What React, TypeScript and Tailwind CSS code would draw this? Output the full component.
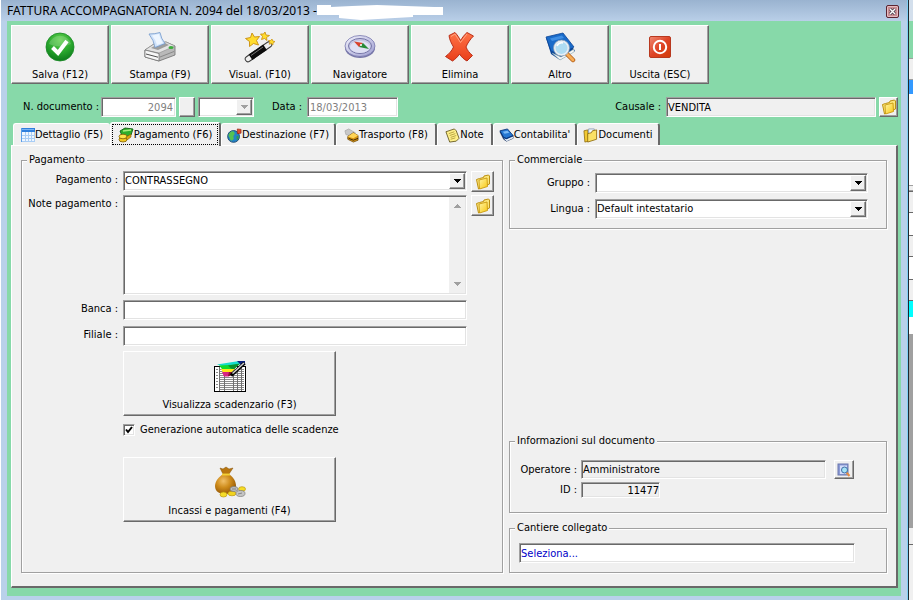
import { useState } from 'react';
import type { ReactNode } from 'react';

const SUNKEN =
  'border border-t-[#a0a0a0] border-l-[#a0a0a0] border-b-white border-r-white shadow-[inset_1px_1px_#696969,inset_-1px_-1px_#e3e3e3]';
const RAISED =
  'bg-[#f0f0f0] border border-t-white border-l-white border-b-[#696969] border-r-[#696969] shadow-[inset_-1px_-1px_#a0a0a0]';

function SaveIcon() {
  return (
    <svg width="32" height="32" viewBox="0 0 32 32">
      <defs>
        <radialGradient id="save" cx="50%" cy="25%" r="75%">
          <stop offset="0" stopColor="#5fd04b" />
          <stop offset="0.6" stopColor="#27a52c" />
          <stop offset="1" stopColor="#0d7a1c" />
        </radialGradient>
      </defs>
      <circle cx="16" cy="16" r="14" fill="url(#save)" stroke="#1a8a26" strokeWidth="0.8" />
      <path d="M5 13a11.5 11.5 0 0 1 22 0q-11 5-22 0z" fill="#fff" opacity="0.18" />
      <path d="M8.500 16.500l5.500 5.500 9-12" fill="none" stroke="#fff" strokeWidth="4" />
    </svg>
  );
}

function PrinterIcon() {
  return (
    <svg width="32" height="32" viewBox="0 0 32 32">
      <path d="M1 19l9-6 12-2 9 4v9l-16 6-14-4z" fill="#b9b9b9" stroke="#6d6d6d" strokeWidth="0.8" />
      <path d="M1 19l9-6 12-2 9 4-16 7z" fill="#e3e3e3" stroke="#8b8b8b" strokeWidth="0.6" />
      <path d="M7 17l5-3 9-2 4 2-11 5z" fill="#9d9d9d" />
      <path d="M5 3q6 0 11-1.500 1 6 5 11l-10 4q-1-7-6-13.500z" fill="#cfe2fa" stroke="#7299cc" strokeWidth="0.8" />
      <path d="M8 4.500l7-1.500q1 5 4 9l-6 2q-1-5-5-9.500z" fill="#eef6ff" />
      <path d="M1 19l14 3.500V30L1 26z" fill="#f7f7f7" stroke="#666" strokeWidth="0.7" />
      <path d="M2 23l12 3.200" stroke="#4f4f4f" strokeWidth="1" />
      <path d="M16 26l14-5.500" stroke="#8a8a8a" strokeWidth="1" />
      <ellipse cx="27" cy="16.500" rx="2.500" ry="1.500" fill="#3cae3c" />
    </svg>
  );
}

function WandIcon() {
  return (
    <svg width="32" height="32" viewBox="0 0 32 32">
      <path d="M4 28l21-14.500" stroke="#3b3b3b" strokeWidth="6.500" strokeLinecap="round" />
      <path d="M4 28l21-14.500" stroke="#efefef" strokeWidth="4.500" strokeLinecap="round" />
      <path d="M6.500 26.300l14.500-10" stroke="#0c0c0c" strokeWidth="6.500" />
      <path d="M7 24.500l12-8.500" stroke="#777" strokeWidth="1" />
      <path d="M8 2l2.500 4 5-.5-3 4 2 4.500-5-1.500-4 3v-5l-4-3 5-1z" fill="#ffdc2e" stroke="#c78c0c" strokeWidth="0.9" />
      <path d="M21 1l1 3 3.500.5-3 2 .5 3-2.500-2-3 1 1-3-2-2.500h3z" fill="#ffdc2e" stroke="#c78c0c" strokeWidth="0.8" />
      <path d="M28 8l.8 2 2.200.6-2 1.400v2l-1.700-1.400-2.200.6.8-2-1.400-1.700h2.200z" fill="#ffdc2e" stroke="#c78c0c" strokeWidth="0.7" />
    </svg>
  );
}

function CompassIcon() {
  return (
    <svg width="32" height="32" viewBox="0 0 32 32">
      <defs>
        <linearGradient id="compass" x1="0" y1="0" x2="1" y2="1">
          <stop offset="0" stopColor="#f2f2fc" />
          <stop offset="1" stopColor="#9d9dd0" />
        </linearGradient>
      </defs>
      <ellipse cx="16" cy="17" rx="15" ry="10" fill="#7777a8" />
      <ellipse cx="16" cy="15" rx="15" ry="10.500" fill="url(#compass)" stroke="#7878ad" strokeWidth="0.8" />
      <ellipse cx="16" cy="15" rx="11.500" ry="7.500" fill="#c6c7e4" stroke="#7575a6" />
      <ellipse cx="16" cy="16" rx="10" ry="6" fill="#dfe0f4" />
      <path d="M10 10.500l9 1.500-4 4z" fill="#d8432e" />
      <path d="M25 18l-6-6-4 4z" fill="#278a37" />
      <circle cx="17" cy="14" r="1" fill="#fff" />
    </svg>
  );
}

function DeleteIcon() {
  return (
    <svg width="32" height="32" viewBox="0 0 32 32">
      <defs>
        <linearGradient id="del" x1="0" y1="0" x2="0" y2="1">
          <stop offset="0" stopColor="#ff7448" />
          <stop offset="1" stopColor="#e93d19" />
        </linearGradient>
      </defs>
      <path
        d="M5 4.500l6-3c2 2 4 5 5.500 8 2-3 4-6 6.500-8l6.500 3.500c-3 3-6 7-7.500 11 1.500 3.500 3.500 6 6.500 8.500L23 30c-3-1.500-5.500-4-7.500-7-2 3-4 5-7 7l-7-4.500c3.500-2.500 6.500-6 8-9.500-2-3.500-4-7-4.500-11.500z"
        fill="url(#del)"
        stroke="#b3240d"
        strokeWidth="0.9"
      />
      <path d="M7 5.500l4-2.500 5.500 8.500L23 3" fill="none" stroke="#ffa380" strokeWidth="1" />
    </svg>
  );
}

function BookSearchIcon() {
  return (
    <svg width="32" height="32" viewBox="0 0 32 32">
      <path d="M2 7l5 16 9 6 15-9-2-3z" fill="#0c4596" />
      <path d="M8 22l9 4 13-8v3l-14 8z" fill="#f4f4f4" stroke="#8aa" strokeWidth="0.5" />
      <path d="M2 6l17-4 11 14-14 8-9-4z" fill="#1a6bc9" stroke="#0c4596" strokeWidth="0.8" />
      <path d="M6 7.500l12-3 2 2.500-12 3z" fill="#3f8fe4" />
      <path d="M23 23l6 6" stroke="#b15b16" strokeWidth="4.500" strokeLinecap="round" />
      <path d="M23 23l6 6" stroke="#f6ac55" strokeWidth="3" strokeLinecap="round" />
      <circle cx="17.500" cy="17" r="7" fill="#aedcf2" stroke="#e8eef4" strokeWidth="2" />
      <circle cx="17.500" cy="17" r="8" fill="none" stroke="#7f98ad" strokeWidth="0.7" />
      <path d="M13 15q2-4 6-3" fill="none" stroke="#fff" strokeWidth="1.500" />
    </svg>
  );
}

function PowerIcon() {
  return (
    <svg width="32" height="32" viewBox="0 0 32 32">
      <defs>
        <linearGradient id="power" x1="0" y1="0" x2="1" y2="1">
          <stop offset="0" stopColor="#f08a74" />
          <stop offset="0.5" stopColor="#de4426" />
          <stop offset="1" stopColor="#d23c08" />
        </linearGradient>
      </defs>
      <rect x="5.500" y="5.500" width="21" height="21" rx="1.500" fill="url(#power)" stroke="#b8391f" />
      <circle cx="16" cy="16" r="6.200" fill="none" stroke="#fff" strokeWidth="2" />
      <path d="M16 13v6" stroke="#fff" strokeWidth="2" />
    </svg>
  );
}

function ScheduleIcon() {
  return (
    <svg width="32" height="32" viewBox="0 0 32 32">
      <g shapeRendering="crispEdges">
        <rect x="0.500" y="6.500" width="31" height="25" fill="#fff" stroke="#000" />
        <path
          d="M2 9.500h2M2 12.500h2M2 15.500h2M2 18.500h2M2 21.500h2M2 24.500h2M2 27.500h2M6 9.500h24M6 11.500h24M6 13.500h24M6 15.500h24M6 17.500h24M6 19.500h24M6 21.500h24M6 23.500h24M6 25.500h24M6 27.500h24M6 29.500h24"
          stroke="#8c8c8c"
        />
        <path d="M5.500 7v24M10.500 7v24M19.500 7v24M23.500 7v24M27.500 7v24" stroke="#707070" />
      </g>
      <path d="M3 4.500L25 1h6l-8 5H8z" fill="#16dccb" />
      <path d="M5 5.500l20-1-5 4.500H8z" fill="#10d92a" />
      <path d="M14 5.500l12-2-6 6-3-1z" fill="#0b8f2e" />
      <path d="M7 9h14l-4 3.500H9z" fill="#ffe914" />
      <path d="M8 12h10l-3 4.500h-5z" fill="#d62482" />
      <path d="M15 12h4l-3 4h-2z" fill="#8d1230" />
      <path d="M23 1h8v3l-4 1z" fill="#0a2180" />
      <path d="M17 15.500L30.500 3" stroke="#000" strokeWidth="3.500" />
      <path d="M18.500 13.500L30 3" stroke="#d4d4d4" strokeWidth="1.500" />
    </svg>
  );
}

function MoneyBagIcon() {
  return (
    <svg width="32" height="32" viewBox="0 0 32 32">
      <defs>
        <radialGradient id="bag" cx="40%" cy="35%" r="65%">
          <stop offset="0" stopColor="#f1c069" />
          <stop offset="0.500" stopColor="#cf8d1d" />
          <stop offset="1" stopColor="#9b5c05" />
        </radialGradient>
      </defs>
      <path d="M6 2l3 1 3-2 3 2 4-1-4 6H9z" fill="#b8760f" stroke="#855006" strokeWidth="0.5" />
      <path d="M9 8c-4 3-8 7-8 12 0 6 5 8 10 8s11-2 11-8c0-5-3-9-7-12z" fill="url(#bag)" />
      <path d="M8 8.500h8" stroke="#f4cf35" strokeWidth="2" />
      <g strokeWidth="0.7">
        <ellipse cx="9.500" cy="28.500" rx="3.500" ry="2.500" fill="#f5dc26" stroke="#bb9611" />
        <ellipse cx="18" cy="27.500" rx="4" ry="2.300" fill="#f0d31f" stroke="#bb9611" />
        <ellipse cx="28" cy="23" rx="3.500" ry="2.300" fill="#f5dc26" stroke="#bb9611" />
        <ellipse cx="20" cy="23" rx="4" ry="2.500" fill="#bdbdbd" stroke="#777" />
        <ellipse cx="26.500" cy="27.500" rx="4.500" ry="3" fill="#c5c5c5" stroke="#777" />
      </g>
      <path d="M18 23h4M24 28l4-1" stroke="#777" strokeWidth="0.8" />
    </svg>
  );
}

function FolderIcon() {
  return (
    <svg width="16" height="16" viewBox="0 0 16 16">
      <defs>
        <linearGradient id="folder" x1="0" y1="0" x2="1" y2="1">
          <stop offset="0" stopColor="#fff6a8" />
          <stop offset="1" stopColor="#f9c710" />
        </linearGradient>
      </defs>
      <path d="M1.500 5.500l3-1 4-1 .5-1.500 4.500-1 1 1v8l-8 3-3 2z" fill="#fbe67a" stroke="#bd9010" />
      <path d="M4 6l8-2 .5 8.500-8 2.500z" fill="url(#folder)" stroke="#c99a10" strokeWidth="0.9" />
    </svg>
  );
}

function GridIcon() {
  return (
    <svg width="14" height="14" viewBox="0 0 14 14" shapeRendering="crispEdges">
      <path d="M0 0h14v14H0z" fill="#eef6ff" />
      <path d="M.5.5h13v13H.5zM4 4v10M7 4v10M10 4v10M0 7h14M0 10h14" fill="none" stroke="#a9cdf5" />
      <path d="M0 0h14v4H0z" fill="#2f7fdd" />
      <path d="M1 1h12v1H1z" fill="#79b4f4" />
      <path d="M0 0h1v14H0z" fill="#5b9de8" />
    </svg>
  );
}

function CashIcon() {
  return (
    <svg width="16" height="16" viewBox="0 0 16 16">
      <path d="M2 4l5-3 8 1-2 6-8 3z" fill="#2fae2b" stroke="#0e5f14" strokeWidth="0.9" />
      <path d="M5 4l8-1" stroke="#a8ed7e" strokeWidth="1.500" />
      <ellipse cx="5" cy="12.500" rx="4" ry="2.500" fill="#f1c820" stroke="#7d5c05" strokeWidth="0.8" />
      <ellipse cx="5" cy="9.500" rx="4" ry="2.300" fill="#ffe34b" stroke="#7d5c05" strokeWidth="0.8" />
      <path d="M8 10l5-3v3l-4 3z" fill="#d9a711" stroke="#7d5c05" strokeWidth="0.6" />
    </svg>
  );
}

function GlobeIcon() {
  return (
    <svg width="15" height="15" viewBox="0 0 16 16">
      <circle cx="7" cy="9" r="6.300" fill="#2383c8" stroke="#123c63" strokeWidth="0.9" />
      <path d="M3 5c2-2 4-2 5 0s-2 3-1 5-2 4-3 3-1-3-2-4 0-3 1-4z" fill="#55c252" />
      <path d="M10 9l2-1 .5 3-2 2z" fill="#2f9d4c" />
      <path d="M11 6V1l4 .5v4z" fill="#e14b2b" stroke="#8c2110" strokeWidth="0.7" />
    </svg>
  );
}

function TransportIcon() {
  return (
    <svg width="15" height="15" viewBox="0 0 16 16">
      <path d="M1 3l4-2 7 4-4 4-6-2z" fill="#c8c8c8" stroke="#999" strokeWidth="0.6" />
      <path d="M4 9l6-4 5 3v5l-5 2-6-3z" fill="#d89412" stroke="#6f4804" strokeWidth="0.8" />
      <path d="M4 9l6-4 5 3-5 3z" fill="#ffd455" />
      <path d="M5 11l5 2 5-2" fill="none" stroke="#392503" />
    </svg>
  );
}

function NoteIcon() {
  return (
    <svg width="15" height="15" viewBox="0 0 16 16">
      <path d="M1 4l9-3 2 2 3 8-3 3-7 1z" fill="#fff08a" stroke="#5f5218" strokeWidth="0.9" />
      <path d="M4 6l6-2M5 8l6-2M6 10l6-2M6 12l5-1.500" stroke="#a38d2b" strokeWidth="0.8" />
    </svg>
  );
}

function LedgerIcon() {
  return (
    <svg width="15" height="15" viewBox="0 0 16 16">
      <path d="M1 4l4 8 3 2 7-3v-3z" fill="#0c3b86" stroke="#071f4d" strokeWidth="0.7" />
      <path d="M5 11l3 1 7-3v2l-7 3z" fill="#e4ecf5" />
      <path d="M1 3l8-2 6 7-7 3-3-1z" fill="#2677d2" stroke="#0a3475" strokeWidth="0.9" />
      <path d="M4 4l5-1 2 2-5 1z" fill="#7cbaf5" />
    </svg>
  );
}

function DocumentsIcon() {
  return (
    <svg width="15" height="15" viewBox="0 0 16 16">
      <path d="M1 3l4-1 1 12-4 1z" fill="#f1c932" stroke="#8a6508" strokeWidth="0.8" />
      <path d="M6 1h6v10H6z" fill="#f3f8ff" stroke="#7a8eaa" strokeWidth="0.8" />
      <path d="M5 6l4-1 1-2 4.500-1v10L5 15z" fill="#fbe165" stroke="#8f6b0a" strokeWidth="0.9" />
    </svg>
  );
}

function LookupIcon() {
  return (
    <svg width="14" height="14" viewBox="0 0 14 14">
      <rect x="1" y="1" width="10" height="11" fill="#8b9bd6" stroke="#6a77ad" />
      <path d="M3 2.500h7V11H3z" fill="#d3dcfa" />
      <path d="M9.500 9.500l3 3.500" stroke="#e28c45" strokeWidth="2" />
      <circle cx="7.500" cy="7" r="3" fill="#a5e2f5" stroke="#3f6fa5" />
    </svg>
  );
}

function Arrow({ disabled }: { disabled?: boolean }) {
  return (
    <svg width="7" height="4" viewBox="0 0 7 4" shapeRendering="crispEdges">
      <path d="M0 0h7v1H6v1H5v1H4v1H3V3H2V2H1V1H0z" fill={disabled ? '#a0a0a0' : '#000'} />
    </svg>
  );
}

interface DropDownProps {
  id: string;
  options: string[];
  disabled?: boolean;
  className?: string;
}

function DropDown({ id, options, disabled, className = '' }: DropDownProps) {
  return (
    <div className={`relative h-5 ${className}`}>
      <select
        id={id}
        disabled={disabled}
        aria-label={id}
        className={`block w-full h-full appearance-none bg-white pl-px pr-5 outline-none ${SUNKEN}`}
      >
        {options.map(o => (
          <option key={o}>{o}</option>
        ))}
      </select>
      <span className={`pointer-events-none absolute top-[2px] right-[2px] bottom-[2px] w-4 flex items-center justify-center ${RAISED}`}>
        <Arrow disabled={disabled} />
      </span>
    </div>
  );
}

function FolderButton({ label }: { label: string }) {
  return (
    <button aria-label={label} className={`shrink-0 ml-1 flex items-center justify-center w-[23px] h-[21px] ${RAISED}`}>
      <FolderIcon />
    </button>
  );
}

function Group({ title, className = '', children }: { title: string; className?: string; children: ReactNode }) {
  return (
    <fieldset className={`min-w-0 border border-[#a0a0a0] shadow-[1px_1px_#fff,inset_1px_1px_#fff] ${className}`}>
      <legend className="ml-[5px] px-[2px] bg-[#f0f0f0]">{title}</legend>
      {children}
    </fieldset>
  );
}

function Row({ label, htmlFor, children }: { label: string; htmlFor: string; children: ReactNode }) {
  return (
    <div className="flex items-start">
      <label htmlFor={htmlFor} className="w-24 shrink-0 mr-[5px] pt-[2px] text-right whitespace-nowrap">
        {label} :
      </label>
      {children}
    </div>
  );
}

const tools = [
  { label: 'Salva (F12)', icon: <SaveIcon /> },
  { label: 'Stampa (F9)', icon: <PrinterIcon /> },
  { label: 'Visual. (F10)', icon: <WandIcon /> },
  { label: 'Navigatore', icon: <CompassIcon /> },
  { label: 'Elimina', icon: <DeleteIcon /> },
  { label: 'Altro', icon: <BookSearchIcon /> },
  { label: 'Uscita (ESC)', icon: <PowerIcon /> },
];

const tabs = [
  { label: 'Dettaglio (F5)', icon: <GridIcon />, width: 'w-[97px]' },
  { label: 'Pagamento (F6)', icon: <CashIcon />, width: 'w-[111px]' },
  { label: 'Destinazione (F7)', icon: <GlobeIcon />, width: 'w-[115px]' },
  { label: 'Trasporto (F8)', icon: <TransportIcon />, width: 'w-[101px]' },
  { label: 'Note', icon: <NoteIcon />, width: 'w-[56px]' },
  { label: "Contabilita'", icon: <LedgerIcon />, width: 'w-[84px]' },
  { label: 'Documenti', icon: <DocumentsIcon />, width: 'w-[83px]' },
];

// slices of the window lying behind the dialog, top to bottom
const backdrop = [
  'h-[21px] bg-[#d3dfec]',
  'h-[37px] bg-[#87d9a9]',
  'h-[22px] bg-[#f0f0f0] border-y border-[#a0a0a0]',
  'h-[14px] bg-[#3399ff]',
  'h-[91px] bg-white',
  'h-[6px] bg-[#f0f0f0] border-y border-[#a0a0a0]',
  'h-[22px] bg-[#f0f0f0] border-y border-[#696969]',
  'h-[22px] bg-white',
  'h-[22px] bg-[#f0f0f0] border-y border-[#696969]',
  'h-[22px] bg-white',
  'h-[22px] bg-[#f0f0f0] border-y border-[#696969]',
  'h-[16px] bg-[#00ffff]',
  'h-[17px] bg-white',
  'h-[194px] bg-[#a0a0a0]',
  'h-[17px] bg-[#f0f0f0] border-b border-[#696969]',
];

export default function App() {
  const [active, setActive] = useState(1);
  const [auto, setAuto] = useState(true);

  return (
    <div className="flex min-h-screen bg-[#f0f0f0] text-[11px] leading-[14px] text-black font-['Tahoma','DejaVu_Sans_Condensed','Noto_Sans',sans-serif]">
      <main className="flex-1 min-w-0 flex flex-col bg-[#b9d1ea] border-l border-l-white">
        <header className="flex items-center h-[21px] pl-[6px] pr-2 bg-linear-to-b from-[#9ab3d0] to-[#b9cfe8] text-[12px] font-['Segoe_UI','Noto_Sans',sans-serif]">
          <h1 className="whitespace-nowrap">FATTURA ACCOMPAGNATORIA N. 2094 del 18/03/2013 -</h1>
          <svg width="126" height="15" viewBox="0 0 126 15" className="mt-1 shrink-0">
            <path d="M0 0h14v2l21-1L60 0l57 2h9v8H96v2l-18 1-34 2-22-2v-3H0z" fill="#fff" />
          </svg>
          <button
            aria-label="Chiudi"
            className="ml-auto mt-[2px] flex items-center justify-center w-[13px] h-[13px] rounded-[2px] border border-[#5b2430] bg-[#c98c92] shadow-[inset_0_0_0_1px_#e5bcc0]"
          >
            <svg width="7" height="7" viewBox="0 0 7 7">
              <path d="M1 1l5 5M6 1L1 6" stroke="#463b49" strokeWidth="3" />
              <path d="M1 1l5 5M6 1L1 6" stroke="#fff" strokeWidth="1.400" />
            </svg>
          </button>
        </header>

        <div className="flex-1 flex flex-col ml-[6px] mr-[6px] mb-[6px] pl-1 pr-[3px] pt-1 pb-2 bg-[#87d9a9]">
          <div className="flex gap-[2px]">
            {tools.map(t => (
              <button key={t.label} className={`flex flex-col items-center gap-[5px] w-[98px] h-[59px] pt-[5px] ${RAISED}`}>
                {t.icon}
                <span>{t.label}</span>
              </button>
            ))}
          </div>

          <div className="flex items-center h-5 mt-[13px] pl-3">
            <label htmlFor="numero" className="w-[75px] whitespace-nowrap">N. documento :</label>
            <input
              id="numero"
              disabled
              defaultValue="2094"
              className={`ml-[3px] w-[75px] h-5 px-[2px] bg-white text-right text-[#808080] ${SUNKEN}`}
            />
            <button aria-label="Cerca numero" className={`ml-[3px] w-4 h-5 ${RAISED}`} />
            <DropDown id="serie" options={['']} disabled className="ml-[3px] w-14" />
            <label htmlFor="data" className="ml-[18px] w-8 whitespace-nowrap">Data :</label>
            <input
              id="data"
              disabled
              defaultValue="18/03/2013"
              className={`ml-[3px] w-[91px] h-5 px-[2px] bg-white text-[#808080] ${SUNKEN}`}
            />
            <label htmlFor="causale" className="ml-auto whitespace-nowrap">Causale :</label>
            <input id="causale" readOnly defaultValue="VENDITA" className={`ml-[5px] mr-[3px] w-[210px] h-5 px-px bg-[#f0f0f0] ${SUNKEN}`} />
            <button aria-label="Apri causale" className={`flex items-center justify-center w-[19px] h-5 ${RAISED}`}>
              <FolderIcon />
            </button>
          </div>

          <div role="tablist" className="flex items-end h-[23px] mt-[5px] pl-[2px]">
            {tabs.map((t, i) => (
              <button
                key={t.label}
                role="tab"
                aria-selected={i === active}
                onClick={() => setActive(i)}
                className={`flex justify-center whitespace-nowrap rounded-t-[3px] bg-[#f0f0f0] border-t border-l border-t-white border-l-white ${t.width} ${
                  i === active
                    ? 'relative z-10 h-6 -mb-px p-px border-r-2 border-r-[#696969]'
                    : `items-center h-[22px] pt-px ${i + 1 === active ? '' : 'border-r-2 border-r-[#696969]'}`
                }`}
              >
                <span className={i === active ? 'flex items-center justify-center w-full h-[21px] border border-dotted border-black' : 'flex items-center'}>
                  {t.icon}
                  {t.label}
                </span>
              </button>
            ))}
          </div>

          <div
            role="tabpanel"
            className="flex-1 grid grid-cols-[1fr_378px] gap-[6px] pt-[7px] pl-[9px] pr-[9px] pb-[13px] bg-[#f0f0f0] border-t border-l border-white border-r-2 border-b-2 border-r-[#696969] border-b-[#696969]"
          >
            <Group title="Pagamento" className="pb-[50px]">
              <div className="flex flex-col pt-1 pr-2">
                <Row label="Pagamento" htmlFor="pagamento">
                  <DropDown id="pagamento" options={['CONTRASSEGNO']} className="flex-1" />
                  <FolderButton label="Apri pagamento" />
                </Row>
                <div className="mt-[3px]">
                  <Row label="Note pagamento" htmlFor="note">
                    <div className={`flex flex-1 h-[100px] p-px bg-white ${SUNKEN}`}>
                      <textarea id="note" className="flex-1 resize-none outline-none overflow-hidden" />
                      <div className="flex flex-col items-center justify-between w-4 py-[7px] bg-[#f0f0f0]">
                        <span className="rotate-180"><Arrow disabled /></span>
                        <Arrow disabled />
                      </div>
                    </div>
                    <FolderButton label="Apri note" />
                  </Row>
                </div>
                <div className="mt-[5px] mr-[27px] flex flex-col gap-[6px]">
                  <Row label="Banca" htmlFor="banca">
                    <input id="banca" className={`flex-1 h-5 px-[2px] bg-white ${SUNKEN}`} />
                  </Row>
                  <Row label="Filiale" htmlFor="filiale">
                    <input id="filiale" className={`flex-1 h-5 px-[2px] bg-white ${SUNKEN}`} />
                  </Row>
                </div>
                <div className="ml-[101px] mt-[5px] flex flex-col items-start">
                  <button className={`flex flex-col items-center gap-[6px] w-[213px] h-[65px] pt-2 ${RAISED}`}>
                    <ScheduleIcon />
                    <span>Visualizza scadenzario (F3)</span>
                  </button>
                  <label className="flex items-center gap-[5px] mt-[7px] whitespace-nowrap">
                    <span className="relative flex w-3 h-3">
                      <input
                        type="checkbox"
                        checked={auto}
                        onChange={e => setAuto(e.target.checked)}
                        className={`w-3 h-3 appearance-none bg-white ${SUNKEN}`}
                      />
                      {auto && (
                        <svg width="12" height="12" viewBox="0 0 12 12" className="pointer-events-none absolute inset-0">
                          <path d="M3 5.500l2 2.500 4-5" fill="none" stroke="#000" strokeWidth="2" />
                        </svg>
                      )}
                    </span>
                    Generazione automatica delle scadenze
                  </label>
                  <button className={`flex flex-col items-center gap-[6px] mt-5 w-[213px] h-[65px] pt-2 ${RAISED}`}>
                    <MoneyBagIcon />
                    <span>Incassi e pagamenti (F4)</span>
                  </button>
                </div>
              </div>
            </Group>

            <div className="flex flex-col min-w-0">
              <Group title="Commerciale" className="pt-[6px] pb-[9px] pr-[18px]">
                <div className="flex items-center">
                  <label htmlFor="gruppo" className="w-20 mr-[5px] text-right">Gruppo :</label>
                  <DropDown id="gruppo" options={['']} className="flex-1" />
                </div>
                <div className="flex items-center mt-[6px]">
                  <label htmlFor="lingua" className="w-20 mr-[5px] text-right">Lingua :</label>
                  <DropDown id="lingua" options={['Default intestatario']} className="flex-1" />
                </div>
              </Group>

              <Group title="Informazioni sul documento" className="mt-auto pt-3 pb-[14px] pr-8">
                <div className="flex items-center">
                  <label htmlFor="operatore" className="w-[67px] mr-1 text-right whitespace-nowrap">Operatore :</label>
                  <input id="operatore" readOnly defaultValue="Amministratore" className={`flex-1 min-w-0 h-[19px] px-px bg-[#f0f0f0] ${SUNKEN}`} />
                  <button aria-label="Cerca operatore" className={`ml-2 flex items-center justify-center w-5 h-[19px] ${RAISED}`}>
                    <LookupIcon />
                  </button>
                </div>
                <div className="flex items-center mt-[3px]">
                  <label htmlFor="codice" className="w-[67px] mr-1 text-right">ID :</label>
                  <input id="codice" readOnly defaultValue="11477" className={`w-[79px] h-4 bg-[#f0f0f0] text-right ${SUNKEN}`} />
                </div>
              </Group>

              <Group title="Cantiere collegato" className="mt-2 pt-2 pb-[9px]">
                <div className="ml-[9px] mr-[31px]">
                  <input aria-label="Cantiere collegato" defaultValue="Seleziona..." className={`block w-full h-5 px-px bg-white text-[#0000c8] ${SUNKEN}`} />
                </div>
              </Group>
            </div>
          </div>
        </div>
      </main>

      <aside className="flex flex-col w-[6px] border-l border-l-[#7fd0f5]">
        <div className="flex-1 flex flex-col border-l border-l-[#202830]">
          {backdrop.map((c, i) => (
            <div key={i} className={c} />
          ))}
        </div>
      </aside>
    </div>
  );
}
